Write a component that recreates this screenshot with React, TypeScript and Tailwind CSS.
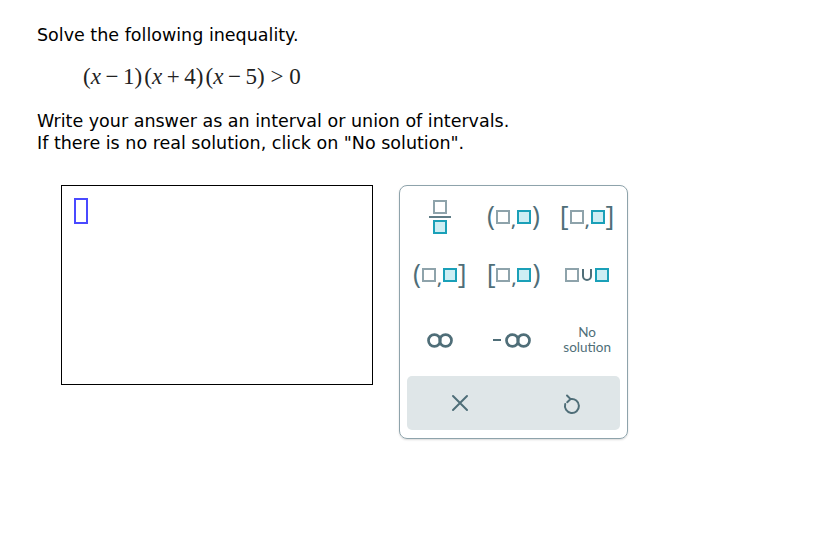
import React from "react";

const C = "#4f6e78";

function GraySq() {
  return <span className="inline-block w-[14px] h-[14px] border-2 border-[#8ea3ab] bg-white align-middle" />;
}
function TealSq() {
  return <span className="inline-block w-[14px] h-[14px] border-2 border-[#1aa0b8] bg-[#cdeef4] align-middle" />;
}

function Interval({ l, r }: { l: string; r: string }) {
  return (
    <div className="flex items-center text-[#4f6e78]">
      <span className="text-[27px] leading-none font-['Open_Sans',sans-serif] -mt-[3px]">{l}</span>
      <span className="flex items-center mx-[1px]">
        <GraySq />
        <span className="text-[18px] leading-none font-['Open_Sans',sans-serif] font-semibold mx-[1px] mt-[6px]">,</span>
        <TealSq />
      </span>
      <span className="text-[27px] leading-none font-['Open_Sans',sans-serif] -mt-[3px]">{r}</span>
    </div>
  );
}

function Inf() {
  return (
    <svg width="26" height="17" viewBox="0 0 26 17" fill="none" stroke={C} strokeWidth="2.7">
      <circle cx="7.4" cy="8.5" r="5.9" />
      <circle cx="18.6" cy="8.5" r="5.9" />
    </svg>
  );
}

export default function App() {
  return (
    <div className="w-[826px] h-[536px] bg-white text-black font-['DejaVu_Sans',Verdana,sans-serif] pl-[37px] pt-[24px]">
      <p className="text-[17.5px] leading-[22px]">Solve the following inequality.</p>
      <div className="ml-[46px] mt-[17px] text-[23px] leading-[28px] font-['Liberation_Serif',serif] text-[#222]">
        <span>(<i>x</i>&thinsp;−&thinsp;1)</span>
        <span className="ml-[2px]">(<i>x</i>&thinsp;+&thinsp;4)</span>
        <span className="ml-[2px]">(<i>x</i>&thinsp;−&thinsp;5)</span>
        <span>&nbsp;&gt;&nbsp;0</span>
      </div>
      <div className="mt-[19px] text-[17.5px] leading-[22px]">
        <p>Write your answer as an interval or union of intervals.</p>
        <p>If there is no real solution, click on "No solution".</p>
      </div>
      <div className="flex items-start mt-[31px] ml-[24px]">
        <div className="w-[312px] h-[200px] border border-black pl-[12px] pt-[12px]">
          <div className="w-[14px] h-[26px] border-2 border-[#4a4aff]" />
        </div>
        <div className="ml-[26px] w-[229px] h-[254px] border border-[#8ea3ab] rounded-[8px] px-[3px] pt-[2px] pb-[7px] flex flex-col shadow-[0_1px_2px_rgba(0,0,0,0.15)]">
          <div className="grid grid-cols-3 h-[58px] items-center justify-items-center">
            <div className="flex flex-col items-center">
              <GraySq />
              <span className="block w-[22px] h-[2px] bg-[#5f7c86] my-[2px]" />
              <TealSq />
            </div>
            <Interval l="(" r=")" />
            <Interval l="[" r="]" />
          </div>
          <div className="grid grid-cols-3 h-[58px] items-center justify-items-center">
            <Interval l="(" r="]" />
            <Interval l="[" r=")" />
            <div className="flex items-center">
              <GraySq />
              <svg width="12" height="14" viewBox="0 0 12 14" fill="none" stroke={C} strokeWidth="2" className="mx-[2px]">
                <path d="M2 1 V8 A4 4 0 0 0 10 8 V1" />
              </svg>
              <TealSq />
            </div>
          </div>
          <div className="grid grid-cols-3 h-[72px] items-center justify-items-center">
            <Inf />
            <div className="flex items-center gap-[4px] ml-[-2px]">
              <span className="block w-[8px] h-[2.5px] bg-[#4f6e78]" />
              <Inf />
            </div>
            <div className="flex flex-col items-center text-[13.5px] leading-[15px] font-['Lato',sans-serif] text-[#4f6e78]">
              <span>No</span>
              <span>solution</span>
            </div>
          </div>
          <div className="mx-[4px] h-[54px] bg-[#dfe6e8] rounded-[5px] grid grid-cols-2 items-center justify-items-center">
            <svg width="18" height="18" viewBox="0 0 18 18" fill="none" stroke={C} strokeWidth="2" strokeLinecap="round">
              <path d="M2 2 L16 16 M16 2 L2 16" />
            </svg>
            <svg width="20" height="24" viewBox="0 0 20 24" fill="none" stroke={C} strokeWidth="2" strokeLinecap="round" strokeLinejoin="round" className="ml-[10px]">
              <path d="M8.6 8.1 A7 7 0 1 1 3.2 13" />
              <path d="M5 4.5 L8.6 8.1 L5.2 11.2" />
            </svg>
          </div>
        </div>
      </div>
    </div>
  );
}
